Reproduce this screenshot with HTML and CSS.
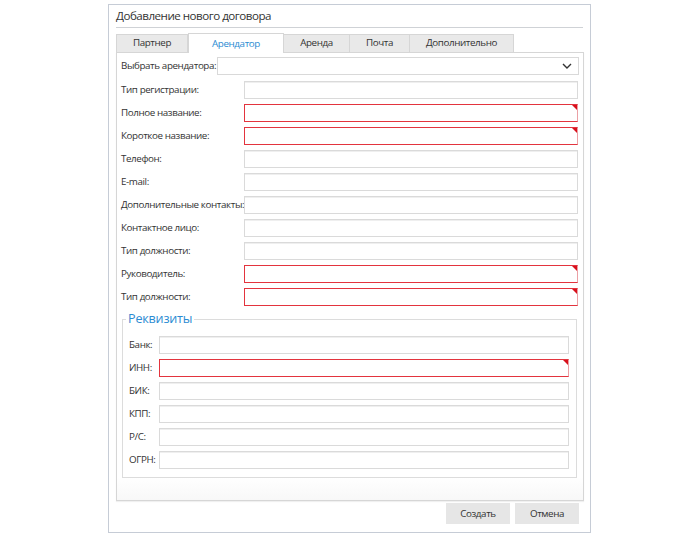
FILE: index.html
```html
<!DOCTYPE html>
<html lang="ru">
<head>
<meta charset="utf-8">
<title>Добавление нового договора</title>
<link rel="stylesheet" href="styles.css">
</head>
<body>
<div class="window">
  <div class="title">Добавление нового договора</div>
  <div class="tabs">
    <div class="tab t1">Партнер</div>
    <div class="tab t2 active">Арендатор</div>
    <div class="tab t3">Аренда</div>
    <div class="tab t4">Почта</div>
    <div class="tab t5">Дополнительно</div>
  </div>
  <div class="panel">
    <div class="select-row">
      <label class="lbl">Выбрать арендатора:</label>
      <div class="select">
        <svg class="chev" width="10" height="6" viewBox="0 0 10 6"><path d="M1 1 L5 5 L9 1" fill="none" stroke="#333" stroke-width="1.4"/></svg>
      </div>
    </div>
    <div class="rows">
      <label class="lbl">Тип регистрации:</label><div class="field"></div>
      <label class="lbl">Полное название:</label><div class="field req"></div>
      <label class="lbl">Короткое название:</label><div class="field req"></div>
      <label class="lbl">Телефон:</label><div class="field"></div>
      <label class="lbl">E-mail:</label><div class="field"></div>
      <label class="lbl">Дополнительные контакты:</label><div class="field"></div>
      <label class="lbl">Контактное лицо:</label><div class="field"></div>
      <label class="lbl">Тип должности:</label><div class="field"></div>
      <label class="lbl">Руководитель:</label><div class="field req"></div>
      <label class="lbl">Тип должности:</label><div class="field req"></div>
    </div>
    <fieldset class="group">
      <legend>Реквизиты</legend>
      <div class="rows sub">
        <label class="lbl">Банк:</label><div class="field"></div>
        <label class="lbl">ИНН:</label><div class="field req"></div>
        <label class="lbl">БИК:</label><div class="field"></div>
        <label class="lbl">КПП:</label><div class="field"></div>
        <label class="lbl">Р/С:</label><div class="field"></div>
        <label class="lbl">ОГРН:</label><div class="field"></div>
      </div>
    </fieldset>
  </div>
  <div class="buttons">
    <button class="btn">Создать</button>
    <button class="btn">Отмена</button>
  </div>
</div>
</body>
</html>
```

FILE: styles.css
```css
html, body {
  margin: 0;
  padding: 0;
  background: #ffffff;
}
body {
  font-family: "Open Sans", "Noto Sans", sans-serif;
  font-size: 9.8px;
  letter-spacing: -0.4px;
  color: #333333;
}
.window {
  box-sizing: border-box;
  margin: 4px 0 0 108px;
  width: 483px;
  height: 529px;
  border: 1px solid #c6ccd6;
  background: #ffffff;
  padding: 0 7px;
}
.title {
  height: 22px;
  line-height: 22px;
  font-size: 11.6px;
  letter-spacing: -0.5px;
  color: #333;
  border-bottom: 1px solid #cfd2d6;
}
.tabs {
  display: flex;
  align-items: flex-end;
  height: 24px;
  position: relative;
  z-index: 1;
}
.tab {
  box-sizing: border-box;
  height: 18px;
  line-height: 16px;
  text-align: center;
  background: #e9e9e9;
  border: 1px solid #d6d6d6;
  border-bottom: none;
  color: #333;
}
.tab + .tab { border-left: none; }
.t1 { width: 72px; }
.t2 { width: 96px; }
.t3 { width: 66px; }
.t4 { width: 60px; }
.t5 { width: 104px; }
.tab.active {
  height: 20px;
  line-height: 19px;
  background: #ffffff;
  color: #2b8bd2;
  margin-bottom: -1px;
  border-left: 1px solid #d6d6d6;
}
.panel {
  box-sizing: border-box;
  width: 468px;
  height: 449px;
  border: 1px solid #d6d6d6;
  padding: 4px 4px 0 4px;
  background: linear-gradient(#ffffff 424px, #f8f8f8);
  box-shadow: 0 1px 1px rgba(0,0,0,0.06);
}
.select-row {
  display: flex;
  align-items: center;
  height: 18px;
}
.select-row .lbl {
  width: 96px;
}
.select {
  box-sizing: border-box;
  flex: 1;
  height: 18px;
  border: 1px solid #d9d9d9;
  background: #fff;
  display: flex;
  align-items: center;
  justify-content: flex-end;
  padding-right: 6px;
}
.lbl {
  white-space: nowrap;
  line-height: 18px;
  color: #333;
}
.rows {
  display: grid;
  grid-template-columns: 123px 1fr;
  row-gap: 5px;
  margin-top: 6px;
  padding-right: 1px;
}
.field {
  box-sizing: border-box;
  height: 18px;
  border: 1px solid #dadada;
  box-shadow: inset 0 1px 0 #efefef;
  background: #fff;
  position: relative;
}
.field.req {
  border-color: #e3343e;
  border-right-color: #eba0a5;
  box-shadow: none;
}
.field.req::after {
  content: "";
  position: absolute;
  top: 0;
  right: 0;
  border-style: solid;
  border-width: 0 5px 5px 0;
  border-color: transparent #d8101c transparent transparent;
}
.group {
  margin: 6px 2px 0 1px;
  padding: 0 7px 8px 6px;
  border: 1px solid #dcdcdc;
  min-width: 0;
}
.group legend {
  font-size: 12.6px;
  letter-spacing: -0.2px;
  line-height: 14px;
  color: #2b8bd2;
  padding: 0 2px;
  margin-left: -3px;
}
.rows.sub {
  grid-template-columns: 30px 1fr;
  margin-top: 10px;
  padding-right: 0;
}
.buttons {
  display: flex;
  justify-content: flex-end;
  gap: 5px;
  margin-top: 2px;
  padding-right: 4px;
}
.btn {
  width: 64px;
  height: 21px;
  border: none;
  background: #e6e6e6;
  font-family: "Open Sans", "Noto Sans", sans-serif;
  font-size: 9.8px;
  letter-spacing: -0.4px;
  color: #333;
  padding: 0;
}
```
